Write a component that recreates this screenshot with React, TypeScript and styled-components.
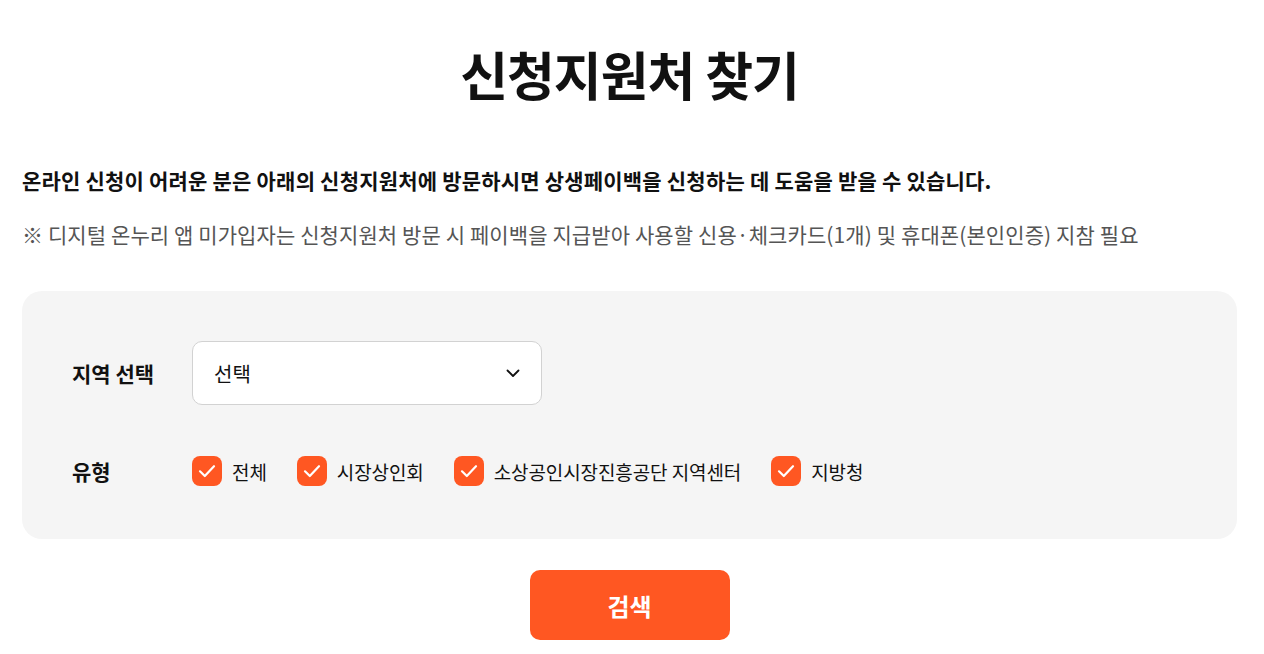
import React from "react";
import styled, { createGlobalStyle } from "styled-components";

const Global = createGlobalStyle`
  html, body { margin: 0; padding: 0; background: #fff; }
  body { font-family: "Noto Sans CJK KR", "Noto Sans", sans-serif; color: #111; }
  * { box-sizing: border-box; }
`;

const Page = styled.main`
  padding: 0 27px 0 22px;
  display: flex;
  flex-direction: column;
`;

const Title = styled.h1`
  margin: 38px 0 0;
  text-align: center;
  font-size: 52px;
  font-weight: 700;
  letter-spacing: -1px;
  line-height: 72px;
  color: #111;
`;

const Lead = styled.p`
  margin: 55px 0 0;
  font-size: 21px;
  font-weight: 700;
  line-height: 30px;
  letter-spacing: 0.2px;
  color: #111;
`;

const Note = styled.p`
  margin: 24px 0 0;
  font-size: 21px;
  font-weight: 400;
  line-height: 30px;
  letter-spacing: 0.1px;
  color: #555;
`;

const Panel = styled.section`
  margin-top: 42px;
  background: #f5f5f5;
  border-radius: 20px;
  padding: 50px 50px 53px;
  display: flex;
  flex-direction: column;
  gap: 51px;
`;

const Row = styled.div`
  display: flex;
  align-items: center;
`;

const Label = styled.span`
  width: 120px;
  font-size: 21px;
  font-weight: 700;
  color: #111;
`;

const Select = styled.div`
  width: 350px;
  height: 64px;
  background: #fff;
  border: 1px solid #d2d2d2;
  border-radius: 10px;
  padding: 0 20px 0 21px;
  display: flex;
  align-items: center;
  justify-content: space-between;
  font-size: 20px;
  color: #111;
`;

const Checks = styled.div`
  display: flex;
  align-items: center;
  gap: 30px;
`;

const CheckItem = styled.label`
  display: flex;
  align-items: center;
  gap: 10px;
  font-size: 19px;
  letter-spacing: -0.1px;
  color: #111;
`;

const Box = styled.span`
  width: 30px;
  height: 30px;
  border-radius: 8px;
  background: #ff5722;
  display: flex;
  align-items: center;
  justify-content: center;
`;

const Actions = styled.div`
  display: flex;
  justify-content: center;
  margin-top: 31px;
`;

const SearchButton = styled.button`
  width: 200px;
  height: 70px;
  border: none;
  border-radius: 10px;
  background: #ff5722;
  color: #fff;
  font-family: inherit;
  font-size: 24px;
  font-weight: 700;
  cursor: pointer;
`;

const Check = () => (
  <svg width="22" height="22" viewBox="0 0 22 22" fill="none">
    <path d="M4 11.3 L8.8 16 L18 6.2" stroke="#fff" strokeWidth="2.2" strokeLinecap="round" strokeLinejoin="round" />
  </svg>
);

const Chevron = () => (
  <svg width="16" height="16" viewBox="0 0 16 16" fill="none">
    <path d="M2.5 5.5 L8 11 L13.5 5.5" stroke="#111" strokeWidth="1.8" strokeLinecap="round" strokeLinejoin="round" />
  </svg>
);

const types = ["전체", "시장상인회", "소상공인시장진흥공단 지역센터", "지방청"];

export default function App() {
  return (
    <>
      <Global />
      <Page>
        <Title>신청지원처 찾기</Title>
        <Lead>온라인 신청이 어려운 분은 아래의 신청지원처에 방문하시면 상생페이백을 신청하는 데 도움을 받을 수 있습니다.</Lead>
        <Note>※ 디지털 온누리 앱 미가입자는 신청지원처 방문 시 페이백을 지급받아 사용할 신용·체크카드(1개) 및 휴대폰(본인인증) 지참 필요</Note>
        <Panel>
          <Row>
            <Label>지역 선택</Label>
            <Select>
              <span>선택</span>
              <Chevron />
            </Select>
          </Row>
          <Row>
            <Label>유형</Label>
            <Checks>
              {types.map((t) => (
                <CheckItem key={t}>
                  <Box><Check /></Box>
                  {t}
                </CheckItem>
              ))}
            </Checks>
          </Row>
        </Panel>
        <Actions>
          <SearchButton>검색</SearchButton>
        </Actions>
      </Page>
    </>
  );
}
